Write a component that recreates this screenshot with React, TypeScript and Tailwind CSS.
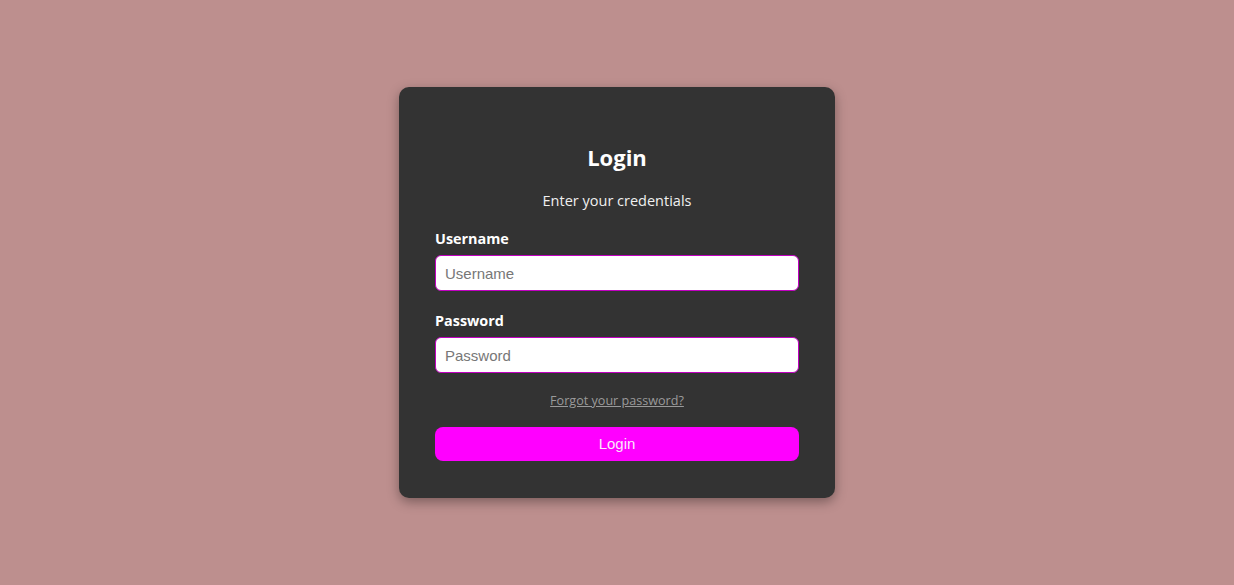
import React from "react";

export default function App() {
  return (
    <div
      className="w-full h-[585px] bg-[#bd8f8e] flex justify-center"
      style={{ fontFamily: '"Open Sans", sans-serif' }}
    >
      <div className="mt-[87px] w-[436px] h-[411px] bg-[#333333] rounded-[10px] shadow-[0_4px_12px_rgba(0,0,0,0.35)] px-[36px] pt-[55px] box-border flex flex-col">
        <h1 className="text-center text-white font-bold text-[22px] leading-[30px]">Login</h1>
        <p className="mt-[18px] text-center text-[#f0f0f0] text-[14.5px] leading-[22px]">Enter your credentials</p>
        <label className="mt-[16px] text-white font-bold text-[14.4px] leading-[22px]">Username</label>
        <input
          className="mt-[5px] h-[36px] w-full bg-white rounded-[6px] border border-[#c000c0] px-[9px] text-[15px] text-black placeholder:text-[#777] outline-none"
          style={{ fontFamily: '"Liberation Sans", Arial, sans-serif' }}
          placeholder="Username"
        />
        <label className="mt-[19px] text-white font-bold text-[14.4px] leading-[22px]">Password</label>
        <input
          type="password"
          className="mt-[5px] h-[36px] w-full bg-white rounded-[6px] border border-[#c000c0] px-[9px] text-[15px] text-black placeholder:text-[#777] outline-none"
          style={{ fontFamily: '"Liberation Sans", Arial, sans-serif' }}
          placeholder="Password"
        />
        <a href="#" className="mt-[19px] self-center text-[12.6px] leading-[18px] text-[#9a9a9a] underline">
          Forgot your password?
        </a>
        <button
          className="mt-[17px] h-[34px] w-full bg-[#ff00ff] rounded-[8px] text-[#fbe8fb] text-[15px]"
          style={{ fontFamily: '"Liberation Sans", Arial, sans-serif' }}
        >
          Login
        </button>
      </div>
    </div>
  );
}
